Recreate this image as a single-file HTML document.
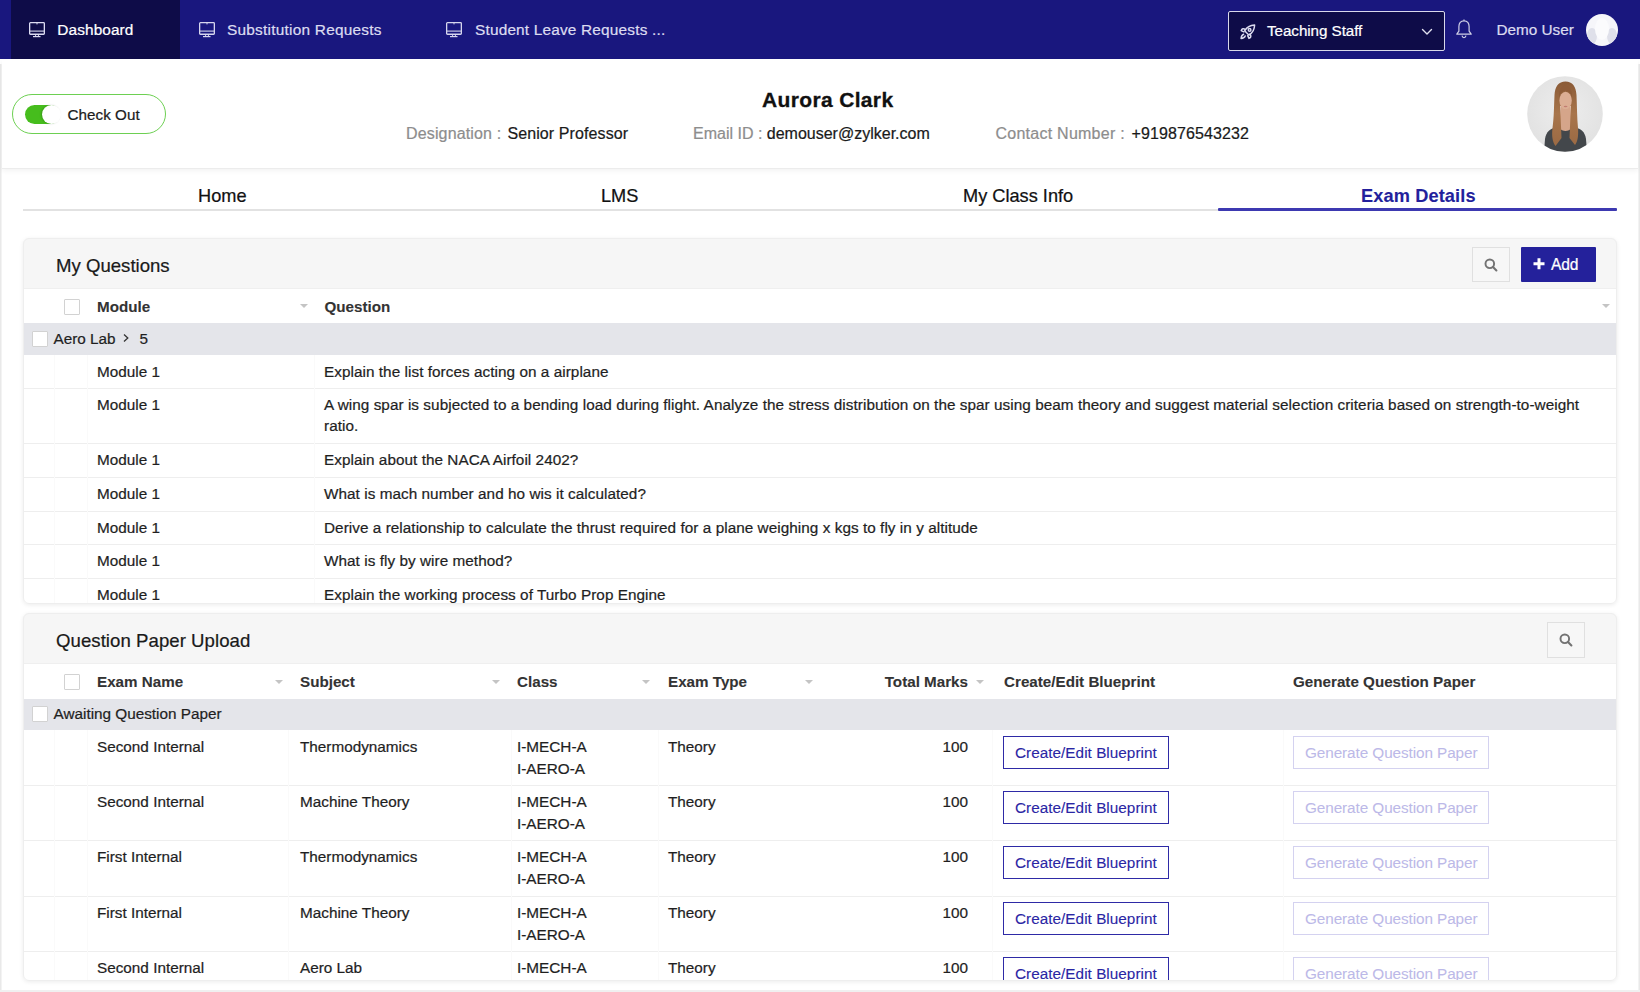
<!DOCTYPE html><html><head><meta charset="utf-8"><style>
*{box-sizing:border-box;margin:0;padding:0}
html,body{width:1640px;height:992px;overflow:hidden;background:#fff;font-family:"Liberation Sans",sans-serif;color:#222}
.a{position:absolute;white-space:nowrap;-webkit-text-stroke:0.22px}
.clip{position:absolute;overflow:hidden;border-radius:6px}
.wrap{position:absolute;width:1640px;height:992px}
.cb{position:absolute;width:15.5px;height:15.5px;border:1px solid #d2d2d2;background:#fff;border-radius:1px}
.arr{position:absolute;width:0;height:0;border-left:4px solid transparent;border-right:4px solid transparent;border-top:4px solid #c4c4c4}
.b1{position:absolute;border:1.5px solid #2e2aa6;background:#fff}
.b2{position:absolute;border:1.5px solid #d3d1f0;background:#fff}
</style></head><body>
<div class="a" style="left:0px;top:64px;width:1px;height:928px;background:#e9e9e9;"></div>
<div class="a" style="left:1px;top:64px;width:1px;height:928px;background:#f3f3f3;"></div>
<div class="a" style="left:1638px;top:64px;width:1px;height:928px;background:#f3f3f3;"></div>
<div class="a" style="left:1639px;top:64px;width:1px;height:928px;background:#e9e9e9;"></div>
<div class="a" style="left:0px;top:990px;width:1640px;height:2px;background:#f0f0f0;"></div>
<div class="a" style="left:0px;top:0px;width:1640px;height:59px;background:#19177e;"></div>
<div class="a" style="left:11px;top:0px;width:169px;height:59px;background:#0e0c48;"></div>
<svg class="a" style="left:29px;top:22px" width="16" height="16" viewBox="0 0 16 16"><rect x="0.65" y="0.65" width="14.7" height="11.6" rx="0.8" fill="none" stroke="#dcdcf2" stroke-width="1.3"/><line x1="0.65" y1="9.1" x2="15.35" y2="9.1" stroke="#dcdcf2" stroke-width="1.1"/><line x1="8" y1="0.7" x2="8" y2="2.4" stroke="#dcdcf2" stroke-width="1"/><line x1="6.6" y1="12.3" x2="6.6" y2="14" stroke="#dcdcf2" stroke-width="1"/><line x1="9.4" y1="12.3" x2="9.4" y2="14" stroke="#dcdcf2" stroke-width="1"/><line x1="4" y1="14.6" x2="11.5" y2="14.6" stroke="#dcdcf2" stroke-width="1.2"/></svg>
<div class="a" style="left:57.3px;top:19.01px;font-size:15.4px;line-height:21.56px;color:#ffffff;letter-spacing:0.1px">Dashboard</div>
<svg class="a" style="left:199px;top:22px" width="16" height="16" viewBox="0 0 16 16"><rect x="0.65" y="0.65" width="14.7" height="11.6" rx="0.8" fill="none" stroke="#d6d6ee" stroke-width="1.3"/><line x1="0.65" y1="9.1" x2="15.35" y2="9.1" stroke="#d6d6ee" stroke-width="1.1"/><line x1="8" y1="0.7" x2="8" y2="2.4" stroke="#d6d6ee" stroke-width="1"/><line x1="6.6" y1="12.3" x2="6.6" y2="14" stroke="#d6d6ee" stroke-width="1"/><line x1="9.4" y1="12.3" x2="9.4" y2="14" stroke="#d6d6ee" stroke-width="1"/><line x1="4" y1="14.6" x2="11.5" y2="14.6" stroke="#d6d6ee" stroke-width="1.2"/></svg>
<div class="a" style="left:227px;top:19.01px;font-size:15.4px;line-height:21.56px;color:#dcdcf0;letter-spacing:0.24px">Substitution Requests</div>
<svg class="a" style="left:446px;top:22px" width="16" height="16" viewBox="0 0 16 16"><rect x="0.65" y="0.65" width="14.7" height="11.6" rx="0.8" fill="none" stroke="#d6d6ee" stroke-width="1.3"/><line x1="0.65" y1="9.1" x2="15.35" y2="9.1" stroke="#d6d6ee" stroke-width="1.1"/><line x1="8" y1="0.7" x2="8" y2="2.4" stroke="#d6d6ee" stroke-width="1"/><line x1="6.6" y1="12.3" x2="6.6" y2="14" stroke="#d6d6ee" stroke-width="1"/><line x1="9.4" y1="12.3" x2="9.4" y2="14" stroke="#d6d6ee" stroke-width="1"/><line x1="4" y1="14.6" x2="11.5" y2="14.6" stroke="#d6d6ee" stroke-width="1.2"/></svg>
<div class="a" style="left:475px;top:19.01px;font-size:15.4px;line-height:21.56px;color:#dcdcf0;letter-spacing:0.18px">Student Leave Requests ...</div>
<div class="a" style="left:1228px;top:11px;width:217px;height:40px;background:#0e0c48;border:1.5px solid #d8d8ea;border-radius:2px"></div>
<svg class="a" style="left:1240px;top:23.5px" width="16" height="16" viewBox="0 0 16 16" fill="none" stroke="#dcdcf0" stroke-width="1.5" stroke-linecap="round" stroke-linejoin="round"><path d="M14.6 0.9 C10.4 1 6.8 3 4.6 6.8 L8.8 11 C12.6 8.8 14.5 5.2 14.6 0.9 Z"/><circle cx="9.6" cy="5.9" r="1.3"/><path d="M5.4 5.6 C3.6 4.2 1.8 4.6 1.2 6.6 L3.9 7.9"/><path d="M10 10.2 C11.4 12 11 13.8 9 14.4 L7.7 11.7"/><path d="M3.6 10.3 C2.2 10.8 1.3 12.2 1.1 14.5 C3.3 14.3 4.7 13.4 5.2 12"/></svg>
<div class="a" style="left:1267px;top:20.18px;font-size:15.2px;line-height:21.28px;color:#ffffff;letter-spacing:-0.05px">Teaching Staff</div>
<svg class="a" style="left:1421px;top:28px" width="12" height="8" viewBox="0 0 12 8"><path d="M1.5 1.5 L6 6 L10.5 1.5" fill="none" stroke="#e0e0ee" stroke-width="1.4" stroke-linecap="round" stroke-linejoin="round"/></svg>
<svg class="a" style="left:1455px;top:19px" width="18" height="20" viewBox="0 0 18 20" fill="none" stroke="#cfcfe6" stroke-width="1.2" stroke-linejoin="round"><path d="M9 1.8 C5.6 1.8 3.9 4.3 3.9 7.6 L3.9 12.2 L1.8 15.2 L16.2 15.2 L14.1 12.2 L14.1 7.6 C14.1 4.3 12.4 1.8 9 1.8 Z"/><path d="M7 16.6 C7.3 18 8 18.6 9 18.6 C10 18.6 10.7 18 11 16.6"/><path d="M9 0.6 L9 1.8"/></svg>
<div class="a" style="left:1496.5px;top:19.24px;font-size:15.3px;line-height:21.42px;color:#dcdcf0">Demo User</div>
<svg class="a" style="left:1586px;top:14px" width="32" height="32" viewBox="0 0 32 32"><defs><clipPath id="ac"><circle cx="16" cy="16" r="16"/></clipPath></defs><g clip-path="url(#ac)"><rect width="32" height="32" fill="#f6f6fa"/><ellipse cx="6" cy="22" rx="5" ry="8" fill="#dfe0ea"/><ellipse cx="26" cy="22" rx="5" ry="8" fill="#dfe0ea"/><ellipse cx="16" cy="15" rx="7" ry="11" fill="#fbfbfd"/></g></svg>
<div class="a" style="left:2px;top:59px;width:1636px;height:109px;background:#fff;box-shadow:0 1px 0 #ececec, 0 3px 5px rgba(0,0,0,0.05)"></div>
<div class="a" style="left:12px;top:94px;width:154px;height:40px;background:transparent;border:1.7px solid #6dd052;border-radius:20px"></div>
<div class="a" style="left:25px;top:105px;width:35px;height:19px;background:#46bd1d;border-radius:10px"></div>
<div class="a" style="left:42px;top:105px;width:19px;height:19px;background:#fff;border-radius:50%;box-shadow:-1px 0 2px rgba(0,0,0,0.18)"></div>
<div class="a" style="left:67.5px;top:103.68px;font-size:15.2px;line-height:21.28px;color:#1c1c1c;letter-spacing:0.05px">Check Out</div>
<div class="a" style="left:762px;top:85.26px;font-size:21px;line-height:29.4px;color:#111;font-weight:bold;-webkit-text-stroke:0.1px;letter-spacing:0.35px;-webkit-text-stroke:0.3px">Aurora Clark</div>
<div class="a" style="left:406px;top:122.71px;font-size:16px;line-height:22.4px;color:#8d8d8d;letter-spacing:0.15px">Designation : <span style="color:#1a1a1a;margin-left:1.5px;letter-spacing:0.1px">Senior Professor</span></div>
<div class="a" style="left:693px;top:122.71px;font-size:16px;line-height:22.4px;color:#8d8d8d">Email ID : <span style="color:#1a1a1a">demouser@zylker.com</span></div>
<div class="a" style="left:995.5px;top:122.71px;font-size:16px;line-height:22.4px;color:#8d8d8d;letter-spacing:0.25px">Contact Number : <span style="color:#1a1a1a;margin-left:2px;letter-spacing:0.1px">+919876543232</span></div>
<svg class="a" style="left:1527px;top:76px;-webkit-text-stroke:0" width="76" height="76" viewBox="0 0 76 76"><defs><clipPath id="pc"><circle cx="38" cy="38" r="37.8"/></clipPath><radialGradient id="pg" cx="0.5" cy="0.45" r="0.6"><stop offset="0" stop-color="#ededed"/><stop offset="1" stop-color="#e1e1e1"/></radialGradient><linearGradient id="hg" x1="0" y1="0" x2="0" y2="1"><stop offset="0" stop-color="#8a5a36"/><stop offset="0.5" stop-color="#a8754b"/><stop offset="1" stop-color="#9b6a44"/></linearGradient></defs><g clip-path="url(#pc)"><rect width="76" height="76" fill="url(#pg)"/><path d="M17 76 L18 63 C19 56 23 52.5 29 51.5 L48 51.5 C54 52.5 58 56 59 63 L60 76 Z" fill="#43474b"/><path d="M33.5 28 L43.5 28 L44.5 52 C42 56 35 56 32.5 52 Z" fill="#d5a58a"/><path d="M38.5 5.5 C31.5 5.5 28 10.5 27.5 19 C27 29 27 42 25.5 52 C24.5 60 25.5 66 28.5 70 L34.5 62 C34 50 33.5 38 33 30 L44 30 C43.5 38 43 50 42.5 62 L48 69 C51 65 51.5 59 51 52 C50 42 50 29 49.5 19 C49 10.5 45.5 5.5 38.5 5.5 Z" fill="url(#hg)"/><ellipse cx="38.6" cy="24.5" rx="6.2" ry="8.8" fill="#dcae94"/><ellipse cx="38.6" cy="30.5" rx="1.9" ry="0.8" fill="#c27d72"/><path d="M32.2 22 C31.5 13 35 9.5 38.5 9.5 C42 9.5 45.5 13 45 22 C44 16.5 41 14.5 38.5 14.5 C36 14.5 33.2 16.5 32.2 22 Z" fill="#8e5c38"/></g></svg>
<div class="a" style="left:23px;top:209px;width:1594px;height:2px;background:#e2e2e2;"></div>
<div class="a" style="left:1218px;top:208px;width:399px;height:3px;background:#3d39b1;border-radius:1px"></div>
<div class="a" style="left:198px;top:183.98px;font-size:18.2px;line-height:25.48px;color:#111">Home</div>
<div class="a" style="left:601px;top:183.98px;font-size:18.2px;line-height:25.48px;color:#111">LMS</div>
<div class="a" style="left:963px;top:183.98px;font-size:18.2px;line-height:25.48px;color:#111">My Class Info</div>
<div class="a" style="left:1361px;top:183.98px;font-size:18.2px;line-height:25.48px;color:#231f9c;font-weight:bold;-webkit-text-stroke:0.1px;letter-spacing:0.12px">Exam Details</div>
<div class="clip" style="left:23px;top:238px;width:1594px;height:366px;background:#fff;box-shadow:0 1px 4px rgba(0,0,0,0.08)"><div class="wrap" style="left:-23px;top:-238px">
<div class="a" style="left:23px;top:238px;width:1594px;height:51px;background:#f6f6f6;"></div>
<div class="a" style="left:23px;top:288px;width:1594px;height:1px;background:#efefef;"></div>
<div class="a" style="left:56px;top:252.55px;font-size:18.6px;line-height:26.04px;color:#1a1a1a">My Questions</div>
<div class="a" style="left:1472px;top:247px;width:38px;height:35px;background:#f7f7f7;border:1px solid #e0e0e0"></div>
<svg class="a" style="left:1484.0px;top:257.5px" width="14" height="14" viewBox="0 0 14 14"><circle cx="5.8" cy="5.8" r="4.3" fill="none" stroke="#737373" stroke-width="1.95"/><line x1="9" y1="9" x2="12.4" y2="12.4" stroke="#737373" stroke-width="2.1" stroke-linecap="round"/></svg>
<div class="a" style="left:1521px;top:247px;width:75px;height:35px;background:#24219b;border-radius:1px"></div>
<svg class="a" style="left:1533px;top:258px" width="12" height="12" viewBox="0 0 12 12"><path d="M6 0.3 V11.2 M0.5 5.8 H11.5" stroke="#fff" stroke-width="3"/></svg>
<div class="a" style="left:1551px;top:253.64px;font-size:15.6px;line-height:21.84px;color:#fff;letter-spacing:-0.1px">Add</div>
<div class="a" style="left:23px;top:289px;width:1594px;height:34px;background:#fff;"></div>
<div class="cb" style="left:64px;top:299px"></div>
<div class="a" style="left:97px;top:295.88px;font-size:15.2px;line-height:21.28px;color:#333;font-weight:bold;-webkit-text-stroke:0.1px">Module</div>
<div class="arr" style="left:299.5px;top:304.0px"></div>
<div class="a" style="left:324.5px;top:295.88px;font-size:15.2px;line-height:21.28px;color:#333;font-weight:bold;-webkit-text-stroke:0.1px">Question</div>
<div class="arr" style="left:1601.5px;top:304.0px"></div>
<div class="a" style="left:23px;top:323px;width:1594px;height:32px;background:#e4e5ea;"></div>
<div class="cb" style="left:32px;top:331px"></div>
<div class="a" style="left:53.5px;top:327.54px;font-size:15.3px;line-height:21.42px;color:#1f1f1f">Aero Lab</div>
<svg class="a" style="left:122px;top:333px" width="8" height="10" viewBox="0 0 8 10"><path d="M2 1.5 L5.8 5 L2 8.5" fill="none" stroke="#333" stroke-width="1.3"/></svg>
<div class="a" style="left:139.5px;top:327.54px;font-size:15.3px;line-height:21.42px;color:#1f1f1f">5</div>
<div class="a" style="left:54px;top:355px;width:1px;height:33px;background:#fafafa;"></div>
<div class="a" style="left:87px;top:355px;width:1px;height:33px;background:#fafafa;"></div>
<div class="a" style="left:314px;top:355px;width:1px;height:33px;background:#fafafa;"></div>
<div class="a" style="left:23px;top:388px;width:1594px;height:1px;background:#eeeeee;"></div>
<div class="a" style="left:97px;top:360.65px;font-size:15.3px;line-height:21.2px;color:#1f1f1f">Module 1</div>
<div class="a" style="left:324px;top:360.65px;font-size:15.3px;line-height:21.2px;color:#1f1f1f;letter-spacing:0.05px">Explain the list forces acting on a airplane</div>
<div class="a" style="left:54px;top:388px;width:1px;height:55px;background:#fafafa;"></div>
<div class="a" style="left:87px;top:388px;width:1px;height:55px;background:#fafafa;"></div>
<div class="a" style="left:314px;top:388px;width:1px;height:55px;background:#fafafa;"></div>
<div class="a" style="left:23px;top:443px;width:1594px;height:1px;background:#eeeeee;"></div>
<div class="a" style="left:97px;top:393.65px;font-size:15.3px;line-height:21.2px;color:#1f1f1f">Module 1</div>
<div class="a" style="left:324px;top:393.65px;font-size:15.3px;line-height:21.2px;color:#1f1f1f;letter-spacing:0.05px">A wing spar is subjected to a bending load during flight. Analyze the stress distribution on the spar using beam theory and suggest material selection criteria based on strength-to-weight<br>ratio.</div>
<div class="a" style="left:54px;top:443px;width:1px;height:34px;background:#fafafa;"></div>
<div class="a" style="left:87px;top:443px;width:1px;height:34px;background:#fafafa;"></div>
<div class="a" style="left:314px;top:443px;width:1px;height:34px;background:#fafafa;"></div>
<div class="a" style="left:23px;top:477px;width:1594px;height:1px;background:#eeeeee;"></div>
<div class="a" style="left:97px;top:448.65px;font-size:15.3px;line-height:21.2px;color:#1f1f1f">Module 1</div>
<div class="a" style="left:324px;top:448.65px;font-size:15.3px;line-height:21.2px;color:#1f1f1f;letter-spacing:0.05px">Explain about the NACA Airfoil 2402?</div>
<div class="a" style="left:54px;top:477px;width:1px;height:34px;background:#fafafa;"></div>
<div class="a" style="left:87px;top:477px;width:1px;height:34px;background:#fafafa;"></div>
<div class="a" style="left:314px;top:477px;width:1px;height:34px;background:#fafafa;"></div>
<div class="a" style="left:23px;top:511px;width:1594px;height:1px;background:#eeeeee;"></div>
<div class="a" style="left:97px;top:482.65px;font-size:15.3px;line-height:21.2px;color:#1f1f1f">Module 1</div>
<div class="a" style="left:324px;top:482.65px;font-size:15.3px;line-height:21.2px;color:#1f1f1f;letter-spacing:0.05px">What is mach number and ho wis it calculated?</div>
<div class="a" style="left:54px;top:511px;width:1px;height:33px;background:#fafafa;"></div>
<div class="a" style="left:87px;top:511px;width:1px;height:33px;background:#fafafa;"></div>
<div class="a" style="left:314px;top:511px;width:1px;height:33px;background:#fafafa;"></div>
<div class="a" style="left:23px;top:544px;width:1594px;height:1px;background:#eeeeee;"></div>
<div class="a" style="left:97px;top:516.65px;font-size:15.3px;line-height:21.2px;color:#1f1f1f">Module 1</div>
<div class="a" style="left:324px;top:516.65px;font-size:15.3px;line-height:21.2px;color:#1f1f1f;letter-spacing:0.05px">Derive a relationship to calculate the thrust required for a plane weighing x kgs to fly in y altitude</div>
<div class="a" style="left:54px;top:544px;width:1px;height:34px;background:#fafafa;"></div>
<div class="a" style="left:87px;top:544px;width:1px;height:34px;background:#fafafa;"></div>
<div class="a" style="left:314px;top:544px;width:1px;height:34px;background:#fafafa;"></div>
<div class="a" style="left:23px;top:578px;width:1594px;height:1px;background:#eeeeee;"></div>
<div class="a" style="left:97px;top:549.65px;font-size:15.3px;line-height:21.2px;color:#1f1f1f">Module 1</div>
<div class="a" style="left:324px;top:549.65px;font-size:15.3px;line-height:21.2px;color:#1f1f1f;letter-spacing:0.05px">What is fly by wire method?</div>
<div class="a" style="left:54px;top:578px;width:1px;height:42px;background:#fafafa;"></div>
<div class="a" style="left:87px;top:578px;width:1px;height:42px;background:#fafafa;"></div>
<div class="a" style="left:314px;top:578px;width:1px;height:42px;background:#fafafa;"></div>
<div class="a" style="left:23px;top:620px;width:1594px;height:1px;background:#eeeeee;"></div>
<div class="a" style="left:97px;top:583.65px;font-size:15.3px;line-height:21.2px;color:#1f1f1f">Module 1</div>
<div class="a" style="left:324px;top:583.65px;font-size:15.3px;line-height:21.2px;color:#1f1f1f;letter-spacing:0.05px">Explain the working process of Turbo Prop Engine</div>
</div></div>
<div class="a" style="left:23px;top:238px;width:1594px;height:366px;border:1px solid #eeeeee;border-radius:6px"></div>
<div class="clip" style="left:23px;top:613px;width:1594px;height:368px;background:#fff;box-shadow:0 1px 4px rgba(0,0,0,0.08)"><div class="wrap" style="left:-23px;top:-613px">
<div class="a" style="left:23px;top:613px;width:1594px;height:51px;background:#f6f6f6;"></div>
<div class="a" style="left:23px;top:663px;width:1594px;height:1px;background:#efefef;"></div>
<div class="a" style="left:56px;top:627.85px;font-size:18.6px;line-height:26.04px;color:#1a1a1a;letter-spacing:0.05px">Question Paper Upload</div>
<div class="a" style="left:1547px;top:622px;width:38px;height:36px;background:#f7f7f7;border:1px solid #e0e0e0"></div>
<svg class="a" style="left:1559.0px;top:633.0px" width="14" height="14" viewBox="0 0 14 14"><circle cx="5.8" cy="5.8" r="4.3" fill="none" stroke="#737373" stroke-width="1.95"/><line x1="9" y1="9" x2="12.4" y2="12.4" stroke="#737373" stroke-width="2.1" stroke-linecap="round"/></svg>
<div class="a" style="left:23px;top:664px;width:1594px;height:35px;background:#fff;"></div>
<div class="cb" style="left:64px;top:674px"></div>
<div class="a" style="left:97px;top:670.88px;font-size:15.2px;line-height:21.28px;color:#333;font-weight:bold;-webkit-text-stroke:0.1px">Exam Name</div>
<div class="arr" style="left:274.5px;top:679.5px"></div>
<div class="a" style="left:300px;top:670.88px;font-size:15.2px;line-height:21.28px;color:#333;font-weight:bold;-webkit-text-stroke:0.1px">Subject</div>
<div class="arr" style="left:491.5px;top:679.5px"></div>
<div class="a" style="left:517px;top:670.88px;font-size:15.2px;line-height:21.28px;color:#333;font-weight:bold;-webkit-text-stroke:0.1px">Class</div>
<div class="arr" style="left:642.3px;top:679.5px"></div>
<div class="a" style="left:668px;top:670.88px;font-size:15.2px;line-height:21.28px;color:#333;font-weight:bold;-webkit-text-stroke:0.1px">Exam Type</div>
<div class="arr" style="left:804.6px;top:679.5px"></div>
<div class="a" style="right:672px;top:670.88px;font-size:15.2px;line-height:21.28px;color:#333;font-weight:bold;-webkit-text-stroke:0.1px">Total Marks</div>
<div class="arr" style="left:975.5px;top:679.5px"></div>
<div class="a" style="left:1004px;top:670.88px;font-size:15.2px;line-height:21.28px;color:#333;font-weight:bold;-webkit-text-stroke:0.1px">Create/Edit Blueprint</div>
<div class="a" style="left:1293px;top:670.88px;font-size:15.2px;line-height:21.28px;color:#333;font-weight:bold;-webkit-text-stroke:0.1px">Generate Question Paper</div>
<div class="a" style="left:23px;top:699px;width:1594px;height:31px;background:#e4e5ea;"></div>
<div class="cb" style="left:32px;top:706px"></div>
<div class="a" style="left:53.5px;top:702.94px;font-size:15.3px;line-height:21.42px;color:#1f1f1f">Awaiting Question Paper</div>
<div class="a" style="left:54px;top:730px;width:1px;height:55px;background:#fafafa;"></div>
<div class="a" style="left:87px;top:730px;width:1px;height:55px;background:#fafafa;"></div>
<div class="a" style="left:288px;top:730px;width:1px;height:55px;background:#fafafa;"></div>
<div class="a" style="left:511px;top:730px;width:1px;height:55px;background:#fafafa;"></div>
<div class="a" style="left:658px;top:730px;width:1px;height:55px;background:#fafafa;"></div>
<div class="a" style="left:992px;top:730px;width:1px;height:55px;background:#fafafa;"></div>
<div class="a" style="left:1283px;top:730px;width:1px;height:55px;background:#fafafa;"></div>
<div class="a" style="left:23px;top:785px;width:1594px;height:1px;background:#eeeeee;"></div>
<div class="a" style="left:97px;top:736.45px;font-size:15.3px;line-height:21.4px;color:#1f1f1f">Second Internal</div>
<div class="a" style="left:300px;top:736.45px;font-size:15.3px;line-height:21.4px;color:#1f1f1f">Thermodynamics</div>
<div class="a" style="left:517px;top:736.45px;font-size:15.3px;line-height:21.4px;color:#1f1f1f">I-MECH-A<br>I-AERO-A</div>
<div class="a" style="left:668px;top:736.45px;font-size:15.3px;line-height:21.4px;color:#1f1f1f">Theory</div>
<div class="a" style="right:672px;top:736.45px;font-size:15.3px;line-height:21.4px;color:#1f1f1f">100</div>
<div class="a" style="left:1003px;top:736px;width:166px;height:33px;background:#fff;border:1.5px solid #2e2aa6"></div>
<div class="a" style="left:1015px;top:742.24px;font-size:15.3px;line-height:21.42px;color:#2a26a4;letter-spacing:0.03px;-webkit-text-stroke:0.1px">Create/Edit Blueprint</div>
<div class="a" style="left:1293px;top:736px;width:196px;height:33px;background:#fff;border:1.5px solid #d4d2f0"></div>
<div class="a" style="left:1305px;top:742.24px;font-size:15.3px;line-height:21.42px;color:#bcb9e8;letter-spacing:-0.08px;-webkit-text-stroke:0.05px">Generate Question Paper</div>
<div class="a" style="left:54px;top:785px;width:1px;height:55px;background:#fafafa;"></div>
<div class="a" style="left:87px;top:785px;width:1px;height:55px;background:#fafafa;"></div>
<div class="a" style="left:288px;top:785px;width:1px;height:55px;background:#fafafa;"></div>
<div class="a" style="left:511px;top:785px;width:1px;height:55px;background:#fafafa;"></div>
<div class="a" style="left:658px;top:785px;width:1px;height:55px;background:#fafafa;"></div>
<div class="a" style="left:992px;top:785px;width:1px;height:55px;background:#fafafa;"></div>
<div class="a" style="left:1283px;top:785px;width:1px;height:55px;background:#fafafa;"></div>
<div class="a" style="left:23px;top:840px;width:1594px;height:1px;background:#eeeeee;"></div>
<div class="a" style="left:97px;top:791.45px;font-size:15.3px;line-height:21.4px;color:#1f1f1f">Second Internal</div>
<div class="a" style="left:300px;top:791.45px;font-size:15.3px;line-height:21.4px;color:#1f1f1f">Machine Theory</div>
<div class="a" style="left:517px;top:791.45px;font-size:15.3px;line-height:21.4px;color:#1f1f1f">I-MECH-A<br>I-AERO-A</div>
<div class="a" style="left:668px;top:791.45px;font-size:15.3px;line-height:21.4px;color:#1f1f1f">Theory</div>
<div class="a" style="right:672px;top:791.45px;font-size:15.3px;line-height:21.4px;color:#1f1f1f">100</div>
<div class="a" style="left:1003px;top:791px;width:166px;height:33px;background:#fff;border:1.5px solid #2e2aa6"></div>
<div class="a" style="left:1015px;top:797.24px;font-size:15.3px;line-height:21.42px;color:#2a26a4;letter-spacing:0.03px;-webkit-text-stroke:0.1px">Create/Edit Blueprint</div>
<div class="a" style="left:1293px;top:791px;width:196px;height:33px;background:#fff;border:1.5px solid #d4d2f0"></div>
<div class="a" style="left:1305px;top:797.24px;font-size:15.3px;line-height:21.42px;color:#bcb9e8;letter-spacing:-0.08px;-webkit-text-stroke:0.05px">Generate Question Paper</div>
<div class="a" style="left:54px;top:840px;width:1px;height:56px;background:#fafafa;"></div>
<div class="a" style="left:87px;top:840px;width:1px;height:56px;background:#fafafa;"></div>
<div class="a" style="left:288px;top:840px;width:1px;height:56px;background:#fafafa;"></div>
<div class="a" style="left:511px;top:840px;width:1px;height:56px;background:#fafafa;"></div>
<div class="a" style="left:658px;top:840px;width:1px;height:56px;background:#fafafa;"></div>
<div class="a" style="left:992px;top:840px;width:1px;height:56px;background:#fafafa;"></div>
<div class="a" style="left:1283px;top:840px;width:1px;height:56px;background:#fafafa;"></div>
<div class="a" style="left:23px;top:896px;width:1594px;height:1px;background:#eeeeee;"></div>
<div class="a" style="left:97px;top:846.45px;font-size:15.3px;line-height:21.4px;color:#1f1f1f">First Internal</div>
<div class="a" style="left:300px;top:846.45px;font-size:15.3px;line-height:21.4px;color:#1f1f1f">Thermodynamics</div>
<div class="a" style="left:517px;top:846.45px;font-size:15.3px;line-height:21.4px;color:#1f1f1f">I-MECH-A<br>I-AERO-A</div>
<div class="a" style="left:668px;top:846.45px;font-size:15.3px;line-height:21.4px;color:#1f1f1f">Theory</div>
<div class="a" style="right:672px;top:846.45px;font-size:15.3px;line-height:21.4px;color:#1f1f1f">100</div>
<div class="a" style="left:1003px;top:846px;width:166px;height:33px;background:#fff;border:1.5px solid #2e2aa6"></div>
<div class="a" style="left:1015px;top:852.24px;font-size:15.3px;line-height:21.42px;color:#2a26a4;letter-spacing:0.03px;-webkit-text-stroke:0.1px">Create/Edit Blueprint</div>
<div class="a" style="left:1293px;top:846px;width:196px;height:33px;background:#fff;border:1.5px solid #d4d2f0"></div>
<div class="a" style="left:1305px;top:852.24px;font-size:15.3px;line-height:21.42px;color:#bcb9e8;letter-spacing:-0.08px;-webkit-text-stroke:0.05px">Generate Question Paper</div>
<div class="a" style="left:54px;top:896px;width:1px;height:55px;background:#fafafa;"></div>
<div class="a" style="left:87px;top:896px;width:1px;height:55px;background:#fafafa;"></div>
<div class="a" style="left:288px;top:896px;width:1px;height:55px;background:#fafafa;"></div>
<div class="a" style="left:511px;top:896px;width:1px;height:55px;background:#fafafa;"></div>
<div class="a" style="left:658px;top:896px;width:1px;height:55px;background:#fafafa;"></div>
<div class="a" style="left:992px;top:896px;width:1px;height:55px;background:#fafafa;"></div>
<div class="a" style="left:1283px;top:896px;width:1px;height:55px;background:#fafafa;"></div>
<div class="a" style="left:23px;top:951px;width:1594px;height:1px;background:#eeeeee;"></div>
<div class="a" style="left:97px;top:902.45px;font-size:15.3px;line-height:21.4px;color:#1f1f1f">First Internal</div>
<div class="a" style="left:300px;top:902.45px;font-size:15.3px;line-height:21.4px;color:#1f1f1f">Machine Theory</div>
<div class="a" style="left:517px;top:902.45px;font-size:15.3px;line-height:21.4px;color:#1f1f1f">I-MECH-A<br>I-AERO-A</div>
<div class="a" style="left:668px;top:902.45px;font-size:15.3px;line-height:21.4px;color:#1f1f1f">Theory</div>
<div class="a" style="right:672px;top:902.45px;font-size:15.3px;line-height:21.4px;color:#1f1f1f">100</div>
<div class="a" style="left:1003px;top:902px;width:166px;height:33px;background:#fff;border:1.5px solid #2e2aa6"></div>
<div class="a" style="left:1015px;top:908.24px;font-size:15.3px;line-height:21.42px;color:#2a26a4;letter-spacing:0.03px;-webkit-text-stroke:0.1px">Create/Edit Blueprint</div>
<div class="a" style="left:1293px;top:902px;width:196px;height:33px;background:#fff;border:1.5px solid #d4d2f0"></div>
<div class="a" style="left:1305px;top:908.24px;font-size:15.3px;line-height:21.42px;color:#bcb9e8;letter-spacing:-0.08px;-webkit-text-stroke:0.05px">Generate Question Paper</div>
<div class="a" style="left:54px;top:951px;width:1px;height:55px;background:#fafafa;"></div>
<div class="a" style="left:87px;top:951px;width:1px;height:55px;background:#fafafa;"></div>
<div class="a" style="left:288px;top:951px;width:1px;height:55px;background:#fafafa;"></div>
<div class="a" style="left:511px;top:951px;width:1px;height:55px;background:#fafafa;"></div>
<div class="a" style="left:658px;top:951px;width:1px;height:55px;background:#fafafa;"></div>
<div class="a" style="left:992px;top:951px;width:1px;height:55px;background:#fafafa;"></div>
<div class="a" style="left:1283px;top:951px;width:1px;height:55px;background:#fafafa;"></div>
<div class="a" style="left:23px;top:1006px;width:1594px;height:1px;background:#eeeeee;"></div>
<div class="a" style="left:97px;top:957.45px;font-size:15.3px;line-height:21.4px;color:#1f1f1f">Second Internal</div>
<div class="a" style="left:300px;top:957.45px;font-size:15.3px;line-height:21.4px;color:#1f1f1f">Aero Lab</div>
<div class="a" style="left:517px;top:957.45px;font-size:15.3px;line-height:21.4px;color:#1f1f1f">I-MECH-A<br>I-AERO-A</div>
<div class="a" style="left:668px;top:957.45px;font-size:15.3px;line-height:21.4px;color:#1f1f1f">Theory</div>
<div class="a" style="right:672px;top:957.45px;font-size:15.3px;line-height:21.4px;color:#1f1f1f">100</div>
<div class="a" style="left:1003px;top:957px;width:166px;height:33px;background:#fff;border:1.5px solid #2e2aa6"></div>
<div class="a" style="left:1015px;top:963.24px;font-size:15.3px;line-height:21.42px;color:#2a26a4;letter-spacing:0.03px;-webkit-text-stroke:0.1px">Create/Edit Blueprint</div>
<div class="a" style="left:1293px;top:957px;width:196px;height:33px;background:#fff;border:1.5px solid #d4d2f0"></div>
<div class="a" style="left:1305px;top:963.24px;font-size:15.3px;line-height:21.42px;color:#bcb9e8;letter-spacing:-0.08px;-webkit-text-stroke:0.05px">Generate Question Paper</div>
</div></div>
<div class="a" style="left:23px;top:613px;width:1594px;height:368px;border:1px solid #eeeeee;border-radius:6px"></div>
</body></html>
